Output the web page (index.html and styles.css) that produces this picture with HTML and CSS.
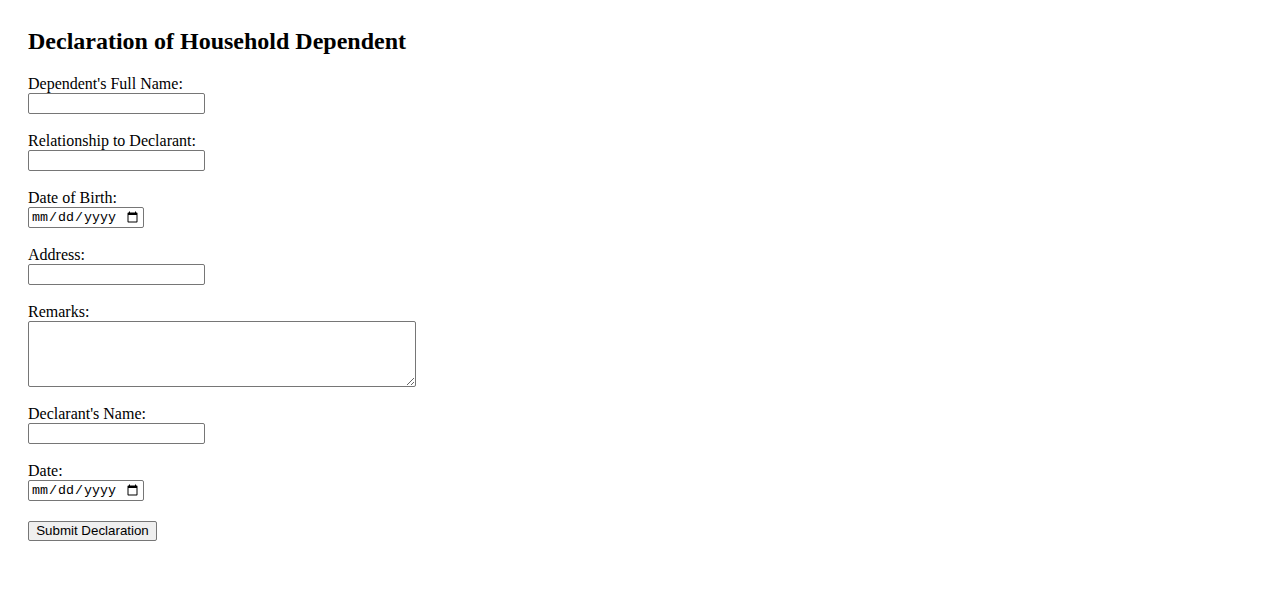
FILE: index.html
```html
<!DOCTYPE html>
<html lang="en">
<head>
<meta charset="utf-8">
<title>Declaration of Household Dependent</title>
<link rel="stylesheet" href="styles.css">
</head>
<body>
<main class="page">
  <h2 class="title">Declaration of Household Dependent</h2>
  <form class="form">
    <div class="field">
      <label class="label" for="dep-name">Dependent's Full Name:</label>
      <input class="text-input" type="text" id="dep-name">
    </div>
    <div class="field">
      <label class="label" for="relationship">Relationship to Declarant:</label>
      <input class="text-input" type="text" id="relationship">
    </div>
    <div class="field">
      <label class="label" for="dob">Date of Birth:</label>
      <input class="date-input" type="date" id="dob">
    </div>
    <div class="field">
      <label class="label" for="address">Address:</label>
      <input class="text-input" type="text" id="address">
    </div>
    <div class="field">
      <label class="label" for="remarks">Remarks:</label>
      <textarea class="textarea" id="remarks"></textarea>
    </div>
    <div class="field">
      <label class="label" for="declarant">Declarant's Name:</label>
      <input class="text-input" type="text" id="declarant">
    </div>
    <div class="field">
      <label class="label" for="date">Date:</label>
      <input class="date-input" type="date" id="date">
    </div>
    <div class="actions">
      <button class="submit" type="submit">Submit Declaration</button>
    </div>
  </form>
</main>
</body>
</html>
```
FILE: styles.css
```css
html, body {
  margin: 0;
  padding: 0;
  background: #ffffff;
}

body {
  font-family: "Liberation Serif", "Times New Roman", serif;
  font-size: 16px;
  color: #000000;
}

.page {
  padding: 28px;
}

.title {
  margin: 0 0 22px 0;
  font-size: 24px;
  line-height: 26px;
  font-weight: bold;
}

.form {
  display: flex;
  flex-direction: column;
  align-items: flex-start;
}

.field {
  display: flex;
  flex-direction: column;
  align-items: flex-start;
  margin-bottom: 19px;
}

.label {
  display: block;
  box-sizing: border-box;
  height: 17px;
  line-height: 15px;
}

.text-input,
.date-input,
.textarea {
  box-sizing: border-box;
  margin: 0;
  border: 1px solid #767676;
  border-radius: 2px;
  background: #ffffff;
}

.text-input {
  width: 177px;
  height: 21px;
  padding: 1px 2px;
  font-family: "Liberation Sans", Arial, sans-serif;
  font-size: 13.333px;
}

.date-input {
  width: 116px;
  height: 21px;
  padding: 1px 2px;
  font-family: "Liberation Mono", "DejaVu Sans Mono", monospace;
  font-size: 13.333px;
  color: #000000;
}

.textarea {
  display: block;
  width: 388px;
  height: 66px;
  padding: 2px;
  resize: both;
  font-family: "Liberation Mono", monospace;
  font-size: 13.333px;
}

.actions {
  margin-top: 1px;
}

.submit {
  box-sizing: border-box;
  margin: 0;
  width: 129px;
  height: 20px;
  padding: 0 6px;
  border: 1px solid #767676;
  border-radius: 2px;
  background: #efefef;
  font-family: "Liberation Sans", Arial, sans-serif;
  font-size: 13.333px;
  line-height: 16px;
  color: #000000;
}
```
